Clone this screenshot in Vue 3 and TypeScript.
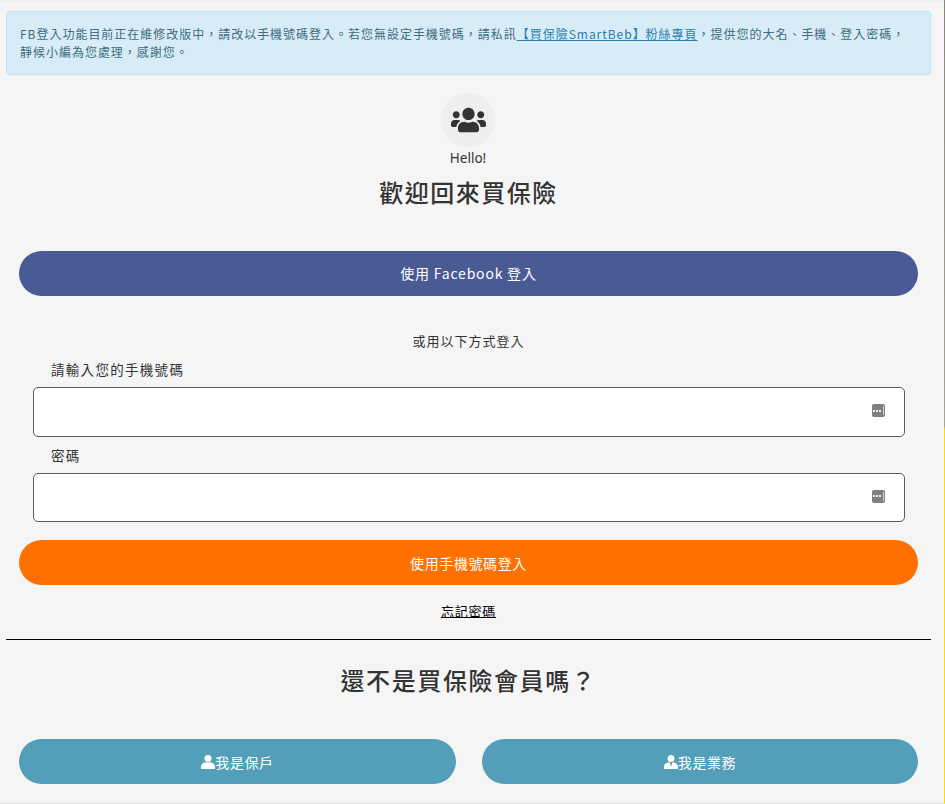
<script setup lang="ts">
const dots = [0, 1, 2]
</script>

<template>
  <div class="page">
    <div class="edge"></div>
    <div class="alert">
      <div class="alert-line">FB登入功能目前正在維修改版中，請改以手機號碼登入。若您無設定手機號碼，請私訊<a href="#" class="alert-link">【買保險SmartBeb】粉絲專頁</a>，提供您的大名、手機、登入密碼，</div>
      <div class="alert-line">靜候小編為您處理，感謝您。</div>
    </div>

    <div class="hero">
      <div class="avatar">
        <svg class="users" viewBox="0 0 640 512" aria-hidden="true">
          <path fill="#333" d="M96 224c35.3 0 64-28.700 64-64s-28.700-64-64-64-64 28.700-64 64 28.700 64 64 64zm448 0c35.300 0 64-28.700 64-64s-28.700-64-64-64-64 28.700-64 64 28.700 64 64 64zm32 32h-64c-17.600 0-33.500 7.100-45.100 18.600 40.300 22.100 68.900 62 75.100 109.400h66c17.700 0 32-14.300 32-32v-32c0-35.300-28.700-64-64-64zm-256 0c61.900 0 112-50.100 112-112S381.900 32 320 32 208 82.100 208 144s50.100 112 112 112zm76.800 32h-8.300c-20.800 10-43.900 16-68.500 16s-47.600-6-68.500-16h-8.300C179.600 288 128 339.600 128 403.200V432c0 26.500 21.500 48 48 48h288c26.500 0 48-21.500 48-48v-28.800c0-63.600-51.600-115.200-115.200-115.200zm-223.700-13.400C161.500 263.100 145.600 256 128 256H64c-35.300 0-64 28.700-64 64v32c0 17.700 14.300 32 32 32h65.900c6.300-47.400 34.900-87.300 75.200-109.400z" />
        </svg>
      </div>
      <div class="hello">Hello!</div>
      <h1 class="title">歡迎回來買保險</h1>
    </div>

    <button class="pill fb" type="button">使用 Facebook 登入</button>

    <div class="or">或用以下方式登入</div>

    <form class="form" @submit.prevent>
      <label class="label label-first">請輸入您的手機號碼</label>
      <div class="field">
        <span class="key">
          <i v-for="d in dots" :key="d" class="dot"></i>
          <i class="bar"></i>
        </span>
      </div>
      <label class="label label-second">密碼</label>
      <div class="field">
        <span class="key">
          <i v-for="d in dots" :key="d" class="dot"></i>
          <i class="bar"></i>
        </span>
      </div>
    </form>

    <button class="pill phone" type="button">使用手機號碼登入</button>

    <div class="forgot"><a href="#">忘記密碼</a></div>
    <hr class="rule" />

    <h2 class="subtitle">還不是買保險會員嗎？</h2>

    <div class="roles">
      <button class="pill role" type="button">
        <svg class="role-icon" viewBox="0 0 14 14" aria-hidden="true">
          <circle cx="7" cy="3.500" r="3.500" fill="#fff" />
          <path fill="#fff" d="M0 14v-2.200C0 9.200 2 7.400 4.400 7.400h5.200c2.400 0 4.400 1.800 4.400 4.400V14z" />
        </svg>我是保戶
      </button>
      <button class="pill role" type="button">
        <svg class="role-icon" viewBox="0 0 14 14" aria-hidden="true">
          <circle cx="7" cy="3.500" r="3.500" fill="#fff" />
          <path fill="#fff" d="M0 14v-2.200C0 9.200 2 7.400 4.400 7.400h1.400L7 12l1.200-4.600h1.400c2.400 0 4.400 1.800 4.400 4.400V14z" />
        </svg>我是業務
      </button>
    </div>
  </div>
</template>

<style>
html,
body {
  margin: 0;
  background: #f5f5f5;
}
</style>

<style scoped>
.page {
  position: relative;
  box-sizing: border-box;
  height: 804px;
  overflow: hidden;
  padding: 11px 14px 0 6px;
  background: #f5f5f5;
  border-bottom: 1px solid #dedede;
  box-shadow: inset 0 3px 3px -2px #e9e9e9;
  font-family: "Noto Sans CJK TC", "Noto Sans", sans-serif;
  color: #333;
  letter-spacing: 1px;
}
.edge {
  position: absolute;
  top: 0;
  right: 0;
  bottom: 0;
  width: 1px;
  background: linear-gradient(to bottom, #8a8578 0, #a8a292 53%, #ffd800 53.500%, #ffd800 100%);
}
.alert {
  box-sizing: border-box;
  height: 64px;
  padding: 13px 13px;
  border: 1px solid #bee5f0;
  border-radius: 3px;
  background: #d7ecf6;
  color: #3f6c80;
  font-size: 12px;
  line-height: 18px;
  letter-spacing: 0.980px;
}
.alert-line {
  white-space: nowrap;
}
.alert-link {
  color: #2a7eae;
  text-decoration: underline;
}
.hero {
  display: flex;
  flex-direction: column;
  align-items: center;
  margin-top: 18px;
}
.avatar {
  display: flex;
  align-items: center;
  justify-content: center;
  width: 54px;
  height: 54px;
  margin-right: 1px;
  border-radius: 50%;
  background: #eeeeee;
}
.users {
  width: 35px;
  height: 28px;
}
.hello {
  margin-top: 3px;
  margin-right: 1px;
  font-family: "Noto Sans", sans-serif;
  font-size: 13.500px;
  line-height: 17px;
  letter-spacing: 0;
}
.title {
  margin: 8px 0 0;
  font-size: 24px;
  font-weight: 500;
  line-height: 34px;
  letter-spacing: 1.500px;
}
.pill {
  display: flex;
  align-items: center;
  justify-content: center;
  box-sizing: border-box;
  height: 45px;
  padding: 0;
  border: 0;
  border-radius: 23px;
  color: #fff;
  font-family: inherit;
  font-size: 14px;
  letter-spacing: 0.600px;
}
.fb {
  width: 899px;
  margin: 42px 0 0 13px;
  padding-bottom: 1px;
  background: #4a5a94;
  letter-spacing: 0.800px;
}
.or {
  margin-top: 36px;
  font-size: 13px;
  line-height: 18px;
  text-align: center;
}
.form {
  margin-left: 27px;
  width: 872px;
}
.label {
  display: block;
  padding-left: 18px;
  font-size: 13.500px;
  line-height: 18px;
  letter-spacing: 1.300px;
}
.label-first {
  margin-top: 10px;
  margin-bottom: 9px;
}
.label-second {
  margin-top: 9px;
  margin-bottom: 9px;
}
.field {
  display: flex;
  align-items: center;
  justify-content: flex-end;
  box-sizing: border-box;
  height: 50px;
  padding-right: 19px;
  border: 1px solid #5a5a5a;
  border-radius: 5px;
  background: #fff;
}
.field + .label + .field {
  height: 49px;
}
.key {
  display: flex;
  align-items: center;
  justify-content: center;
  gap: 1px;
  box-sizing: border-box;
  width: 13px;
  height: 13px;
  margin-bottom: 3px;
  border-radius: 2px;
  background: #808080;
}
.dot {
  width: 2px;
  height: 2px;
  background: #f0f0f0;
}
.bar {
  width: 1px;
  height: 9px;
  margin-left: 1px;
  background: #d0d0d0;
}
.phone {
  width: 899px;
  margin: 18px 0 0 13px;
  background: #ff7000;
}
.forgot {
  margin-top: 17px;
  font-size: 13px;
  line-height: 18px;
  text-align: center;
  letter-spacing: 0.800px;
}
.forgot a {
  color: #000;
  text-decoration: underline;
}
.rule {
  margin: 19px 0 0;
  border: 0;
  border-top: 1px solid #000;
}
.subtitle {
  margin: 22px 0 0;
  font-size: 24px;
  font-weight: 500;
  line-height: 36px;
  text-align: center;
  letter-spacing: 1.600px;
}
.roles {
  display: grid;
  grid-template-columns: 437px 436px;
  gap: 26px;
  margin: 41px 0 0 13px;
}
.role {
  background: #539eb8;
}
.role-icon {
  width: 14px;
  height: 14px;
  margin-right: 0;
}
</style>
